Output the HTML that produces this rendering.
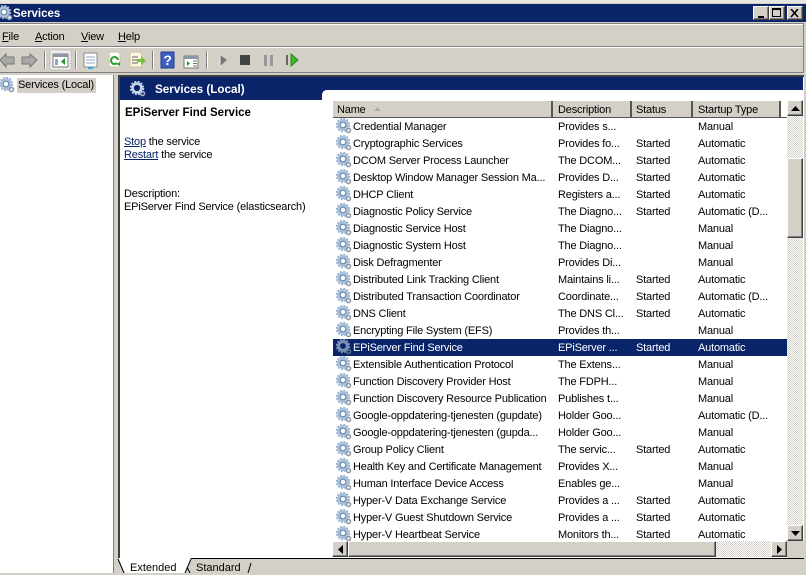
<!DOCTYPE html>
<html><head><meta charset="utf-8">
<style>
html,body{margin:0;padding:0}
body{width:806px;height:573px;overflow:hidden;position:relative;background:#d4d0c8;font-family:"Liberation Sans",sans-serif;font-size:11px;letter-spacing:-.18px;color:#000}
div,span,svg{position:absolute}
.t{white-space:nowrap;line-height:14px}
.b{font-weight:bold;letter-spacing:0;font-size:11.5px}
u{text-decoration:underline}
.row{left:333px;width:454px;height:17px}
.row .t{top:2px}
.c1{left:20px;width:199px;overflow:hidden}
.c2{left:225px}.c3{left:303px}.c4{left:365px}
.row svg{left:3px;top:0}
.sel{background:#0a246a;color:#fff}
.h{top:101px;height:16px;background:#d4d0c8;border-right:2px solid #555;box-sizing:border-box}
.h .t{top:2px}
.btn{background:#d4d0c8;box-sizing:border-box;border:1px solid;border-color:#fff #404040 #404040 #fff;box-shadow:inset -1px -1px 0 #808080}
.track{background-color:#eee;background-image:repeating-conic-gradient(#d4d0c8 0 25%,#fff 0 50%);background-size:2px 2px}
.sep{top:51px;width:1px;height:18px;background:#808080;border-right:1px solid #fff}
</style></head><body>
<svg width="0" height="0" style="left:0;top:0"><defs>
<g id="g"><circle cx="7" cy="7" r="4.400" fill="none" stroke="#a9c0dc" stroke-width="3"/><circle cx="7" cy="7" r="6.400" fill="none" stroke="#9db4d0" stroke-width="1.600" stroke-dasharray="2 1.350"/><circle cx="7" cy="7" r="2.800" fill="#fff" stroke="#5f7ea6" stroke-width="1"/><circle cx="12.500" cy="12.500" r="2" fill="#fff" stroke="#8c97a6" stroke-width="1.500"/></g>
<g id="s"><circle cx="7" cy="7" r="4.400" fill="none" stroke="#7a90b4" stroke-width="3"/><circle cx="7" cy="7" r="6.400" fill="none" stroke="#7a90b4" stroke-width="1.600" stroke-dasharray="2 1.350"/><circle cx="7" cy="7" r="2.600" fill="#0a246a"/><circle cx="12.500" cy="12.500" r="2" fill="none" stroke="#5f6d90" stroke-width="1.500"/></g>
</defs></svg>

<!-- title bar -->
<div style="left:0;top:0;width:806px;height:3px;background:#e8e6e1"></div>
<div style="left:0;top:4px;width:806px;height:18px;background:#0a246a"></div>
<svg width="16" height="16" viewBox="0 0 16 16" style="left:-3px;top:5px"><use href="#g"/></svg>
<div class="t b" style="left:13px;top:7px;color:#fff">Services</div>
<div class="btn" style="left:753px;top:6px;width:16px;height:14px"><div style="left:4px;top:9px;width:6px;height:2px;background:#000"></div></div>
<div class="btn" style="left:769px;top:6px;width:16px;height:14px"><div style="left:2px;top:1px;width:9px;height:9px;border:1px solid #000;border-top-width:2px;box-sizing:border-box"></div></div>
<div class="btn" style="left:787px;top:6px;width:16px;height:14px"><svg width="10" height="9" style="left:2px;top:2px"><path d="M1 0L8 8M8 0L1 8" stroke="#000" stroke-width="1.600"/></svg></div>

<!-- menu -->
<div style="left:0;top:23px;width:804px;height:24px;border:solid #808080;border-width:1px 1px 1px 0;box-sizing:border-box;box-shadow:inset 0 1px 0 #fff"></div>
<div style="left:0;top:47px;width:804px;height:26px;border-bottom:1px solid #808080;border-right:1px solid #808080;box-sizing:border-box;box-shadow:inset 0 1px 0 #fff"></div>
<div class="t" style="left:2px;top:30px"><u>F</u>ile</div>
<div class="t" style="left:35px;top:30px"><u>A</u>ction</div>
<div class="t" style="left:81px;top:30px"><u>V</u>iew</div>
<div class="t" style="left:118px;top:30px"><u>H</u>elp</div>

<!-- toolbar -->
<svg width="806" height="28" viewBox="0 46 806 28" style="left:0;top:46px">
<path d="M0 60L6 54V57H14V64H6V67Z" fill="#a8a8a4" stroke="#777"/>
<path d="M37 60L30 54V57H22V64H30V67Z" fill="#a8a8a4" stroke="#777"/>
<rect x="50" y="50" width="21" height="20" fill="#eeece8" stroke="#aaa" stroke-dasharray="1 1"/>
<rect x="53" y="54" width="15" height="13" fill="#fff" stroke="#777"/><rect x="53" y="54" width="15" height="3" fill="#8a96a4"/><rect x="55" y="59" width="3" height="6" fill="#8fa6c4"/><path d="M65 58V65L61 61.500Z" fill="#1d9a2c"/>
<rect x="84" y="53" width="13" height="14" fill="#fff" stroke="#888"/><path d="M86 57H95M86 60H95M86 63H95" stroke="#8fa6c4"/><rect x="88" y="67" width="5" height="2" fill="#39a5d8"/>
<path d="M109 52H118L120 54V67H109Z" fill="#fff" stroke="#c9c39c"/><path d="M118 60A3.500 3.500 0 1 0 117 63" fill="none" stroke="#2f9e37" stroke-width="2"/><path d="M116 64L120 62L120 66Z" fill="#2f9e37"/>
<path d="M130 52H140L142 54V67H130Z" fill="#fbf8dd" stroke="#c9c39c"/><path d="M132 57H138M132 60H138M132 63H138" stroke="#666"/><path d="M137 59H141V56L146 61L141 65V62H137Z" fill="#6fc23d"/>
<rect x="161" y="52" width="13" height="16" fill="#3b5fc0" stroke="#203a90"/><text x="167.500" y="65" font-family="Liberation Sans" font-weight="bold" font-size="14" fill="#fff" text-anchor="middle">?</text>
<rect x="184" y="56" width="14" height="12" fill="#fff" stroke="#777"/><rect x="184" y="56" width="14" height="3" fill="#8a96a4"/><path d="M187 61L190 63.500L187 66Z" fill="#1d9a2c"/><path d="M193 61H197M193 63.500H197M193 66H197" stroke="#777"/>
<path d="M220 55L227 60L220 66Z" fill="#777"/><path d="M220 55V67" stroke="#eee"/>
<rect x="240" y="55" width="10" height="10" fill="#444"/>
<rect x="264" y="55" width="3" height="11" fill="#999"/><rect x="270" y="55" width="3" height="11" fill="#999"/>
<rect x="286" y="55" width="2" height="10" fill="#666"/><path d="M291 54L298 60L291 66Z" fill="#44b52d" stroke="#2a8a18"/>
</svg>
<div class="sep" style="left:44px"></div><div class="sep" style="left:75px"></div><div class="sep" style="left:152px"></div><div class="sep" style="left:206px"></div>

<!-- tree -->
<div style="left:0;top:75px;width:114px;height:498px;background:#fff;border-right:1px solid #808080;box-sizing:border-box"></div>
<svg width="16" height="16" viewBox="0 0 16 16" style="left:-1px;top:77px"><use href="#g"/></svg>
<div class="t" style="left:17px;top:78px;width:79px;height:15px;line-height:15px;background:#d4d0c8;text-indent:1px">Services (Local)</div>

<!-- right pane -->
<div style="left:118px;top:75px;width:686px;height:484px;background:#fff;border-top:2px solid #404040;border-left:2px solid #404040;box-sizing:border-box"></div>
<div style="left:120px;top:77px;width:683px;height:13px;background:#0a246a"></div>
<div style="left:120px;top:90px;width:202px;height:10px;background:#0a246a"></div>
<div style="left:322px;top:90px;width:5px;height:5px;background:radial-gradient(circle at 100% 100%,#fff 0 5px,#0a246a 5px)"></div>
<svg width="16" height="16" viewBox="0 0 16 16" style="left:130px;top:81px"><circle cx="7" cy="7" r="4.400" fill="none" stroke="#c6d4e8" stroke-width="2.600"/><circle cx="7" cy="7" r="6.400" fill="none" stroke="#c6d4e8" stroke-width="1.600" stroke-dasharray="2 1.400"/><circle cx="12.500" cy="12.500" r="2" fill="none" stroke="#a8b6cc" stroke-width="1.500"/></svg>
<div class="t b" style="left:155px;top:83px;color:#fff;font-size:11.700px">Services (Local)</div>

<div class="t b" style="left:125px;top:106px">EPiServer Find Service</div>
<div class="t" style="left:124px;top:135px"><u style="color:#0a246a">Stop</u> the service</div>
<div class="t" style="left:124px;top:148px"><u style="color:#0a246a">Restart</u> the service</div>
<div class="t" style="left:124px;top:187px">Description:</div>
<div class="t" style="left:124px;top:200px">EPiServer Find Service (elasticsearch)</div>

<!-- list header -->
<div class="h" style="left:333px;width:220px"><div class="t" style="left:4px">Name</div><svg width="9" height="5" style="left:40px;top:5px"><path d="M1 5L4.500 1L8 5Z" fill="#aaa"/></svg></div>
<div class="h" style="left:553px;width:79px"><div class="t" style="left:5px">Description</div></div>
<div class="h" style="left:632px;width:61px"><div class="t" style="left:4px">Status</div></div>
<div class="h" style="left:693px;width:88px"><div class="t" style="left:5px">Startup Type</div></div>
<div style="left:333px;top:117px;width:454px;height:1px;background:#555"></div>

<!-- rows -->
<div class="row" style="top:118px"><svg width="16" height="16" viewBox="0 0 16 16"><use href="#g"/></svg><div class="t c1">Credential Manager</div><div class="t c2">Provides s...</div><div class="t c4">Manual</div></div>
<div class="row" style="top:135px"><svg width="16" height="16" viewBox="0 0 16 16"><use href="#g"/></svg><div class="t c1">Cryptographic Services</div><div class="t c2">Provides fo...</div><div class="t c3">Started</div><div class="t c4">Automatic</div></div>
<div class="row" style="top:152px"><svg width="16" height="16" viewBox="0 0 16 16"><use href="#g"/></svg><div class="t c1">DCOM Server Process Launcher</div><div class="t c2">The DCOM...</div><div class="t c3">Started</div><div class="t c4">Automatic</div></div>
<div class="row" style="top:169px"><svg width="16" height="16" viewBox="0 0 16 16"><use href="#g"/></svg><div class="t c1">Desktop Window Manager Session Ma...</div><div class="t c2">Provides D...</div><div class="t c3">Started</div><div class="t c4">Automatic</div></div>
<div class="row" style="top:186px"><svg width="16" height="16" viewBox="0 0 16 16"><use href="#g"/></svg><div class="t c1">DHCP Client</div><div class="t c2">Registers a...</div><div class="t c3">Started</div><div class="t c4">Automatic</div></div>
<div class="row" style="top:203px"><svg width="16" height="16" viewBox="0 0 16 16"><use href="#g"/></svg><div class="t c1">Diagnostic Policy Service</div><div class="t c2">The Diagno...</div><div class="t c3">Started</div><div class="t c4">Automatic (D...</div></div>
<div class="row" style="top:220px"><svg width="16" height="16" viewBox="0 0 16 16"><use href="#g"/></svg><div class="t c1">Diagnostic Service Host</div><div class="t c2">The Diagno...</div><div class="t c4">Manual</div></div>
<div class="row" style="top:237px"><svg width="16" height="16" viewBox="0 0 16 16"><use href="#g"/></svg><div class="t c1">Diagnostic System Host</div><div class="t c2">The Diagno...</div><div class="t c4">Manual</div></div>
<div class="row" style="top:254px"><svg width="16" height="16" viewBox="0 0 16 16"><use href="#g"/></svg><div class="t c1">Disk Defragmenter</div><div class="t c2">Provides Di...</div><div class="t c4">Manual</div></div>
<div class="row" style="top:271px"><svg width="16" height="16" viewBox="0 0 16 16"><use href="#g"/></svg><div class="t c1">Distributed Link Tracking Client</div><div class="t c2">Maintains li...</div><div class="t c3">Started</div><div class="t c4">Automatic</div></div>
<div class="row" style="top:288px"><svg width="16" height="16" viewBox="0 0 16 16"><use href="#g"/></svg><div class="t c1">Distributed Transaction Coordinator</div><div class="t c2">Coordinate...</div><div class="t c3">Started</div><div class="t c4">Automatic (D...</div></div>
<div class="row" style="top:305px"><svg width="16" height="16" viewBox="0 0 16 16"><use href="#g"/></svg><div class="t c1">DNS Client</div><div class="t c2">The DNS Cl...</div><div class="t c3">Started</div><div class="t c4">Automatic</div></div>
<div class="row" style="top:322px"><svg width="16" height="16" viewBox="0 0 16 16"><use href="#g"/></svg><div class="t c1">Encrypting File System (EFS)</div><div class="t c2">Provides th...</div><div class="t c4">Manual</div></div>
<div class="row sel" style="top:339px"><svg width="16" height="16" viewBox="0 0 16 16"><use href="#s"/></svg><div class="t c1">EPiServer Find Service</div><div class="t c2">EPiServer ...</div><div class="t c3">Started</div><div class="t c4">Automatic</div></div>
<div class="row" style="top:356px"><svg width="16" height="16" viewBox="0 0 16 16"><use href="#g"/></svg><div class="t c1">Extensible Authentication Protocol</div><div class="t c2">The Extens...</div><div class="t c4">Manual</div></div>
<div class="row" style="top:373px"><svg width="16" height="16" viewBox="0 0 16 16"><use href="#g"/></svg><div class="t c1">Function Discovery Provider Host</div><div class="t c2">The FDPH...</div><div class="t c4">Manual</div></div>
<div class="row" style="top:390px"><svg width="16" height="16" viewBox="0 0 16 16"><use href="#g"/></svg><div class="t c1">Function Discovery Resource Publication</div><div class="t c2">Publishes t...</div><div class="t c4">Manual</div></div>
<div class="row" style="top:407px"><svg width="16" height="16" viewBox="0 0 16 16"><use href="#g"/></svg><div class="t c1">Google-oppdatering-tjenesten (gupdate)</div><div class="t c2">Holder Goo...</div><div class="t c4">Automatic (D...</div></div>
<div class="row" style="top:424px"><svg width="16" height="16" viewBox="0 0 16 16"><use href="#g"/></svg><div class="t c1">Google-oppdatering-tjenesten (gupda...</div><div class="t c2">Holder Goo...</div><div class="t c4">Manual</div></div>
<div class="row" style="top:441px"><svg width="16" height="16" viewBox="0 0 16 16"><use href="#g"/></svg><div class="t c1">Group Policy Client</div><div class="t c2">The servic...</div><div class="t c3">Started</div><div class="t c4">Automatic</div></div>
<div class="row" style="top:458px"><svg width="16" height="16" viewBox="0 0 16 16"><use href="#g"/></svg><div class="t c1">Health Key and Certificate Management</div><div class="t c2">Provides X...</div><div class="t c4">Manual</div></div>
<div class="row" style="top:475px"><svg width="16" height="16" viewBox="0 0 16 16"><use href="#g"/></svg><div class="t c1">Human Interface Device Access</div><div class="t c2">Enables ge...</div><div class="t c4">Manual</div></div>
<div class="row" style="top:492px"><svg width="16" height="16" viewBox="0 0 16 16"><use href="#g"/></svg><div class="t c1">Hyper-V Data Exchange Service</div><div class="t c2">Provides a ...</div><div class="t c3">Started</div><div class="t c4">Automatic</div></div>
<div class="row" style="top:509px"><svg width="16" height="16" viewBox="0 0 16 16"><use href="#g"/></svg><div class="t c1">Hyper-V Guest Shutdown Service</div><div class="t c2">Provides a ...</div><div class="t c3">Started</div><div class="t c4">Automatic</div></div>
<div class="row" style="top:526px"><svg width="16" height="16" viewBox="0 0 16 16"><use href="#g"/></svg><div class="t c1">Hyper-V Heartbeat Service</div><div class="t c2">Monitors th...</div><div class="t c3">Started</div><div class="t c4">Automatic</div></div>

<!-- scrollbars -->
<div class="track" style="left:787px;top:100px;width:16px;height:441px"></div>
<div class="btn" style="left:787px;top:100px;width:16px;height:16px"><svg width="9" height="5" style="left:3px;top:5px"><path d="M0 5L4.500 0L9 5Z"/></svg></div>
<div class="btn" style="left:787px;top:158px;width:16px;height:80px"></div>
<div class="btn" style="left:787px;top:525px;width:16px;height:16px"><svg width="9" height="5" style="left:3px;top:5px"><path d="M0 0L4.500 5L9 0Z"/></svg></div>
<div class="track" style="left:332px;top:541px;width:455px;height:16px"></div>
<div class="btn" style="left:332px;top:541px;width:16px;height:16px"><svg width="5" height="9" style="left:5px;top:3px"><path d="M5 0L0 4.500L5 9Z"/></svg></div>
<div class="btn" style="left:348px;top:541px;width:368px;height:16px"></div>
<div class="btn" style="left:771px;top:541px;width:16px;height:16px"><svg width="5" height="9" style="left:5px;top:3px"><path d="M0 0L5 4.500L0 9Z"/></svg></div>
<div style="left:787px;top:541px;width:17px;height:17px;background:#d4d0c8"></div>

<!-- tabs -->
<div style="left:118px;top:558px;width:686px;height:15px;background:#d4d0c8"></div>
<div style="left:118px;top:558px;width:686px;height:1px;background:#000"></div>
<svg width="150" height="15" style="left:115px;top:558px"><path d="M3 0H76L70 15H10Z" fill="#fff"/><path d="M3 1L9 15M76 1L70 15M72 9L75 15M136 5L133 15" fill="none" stroke="#000"/></svg>
<div class="t" style="left:130px;top:561px;letter-spacing:0">Extended</div>
<div class="t" style="left:196px;top:561px;letter-spacing:0">Standard</div>
</body></html>
